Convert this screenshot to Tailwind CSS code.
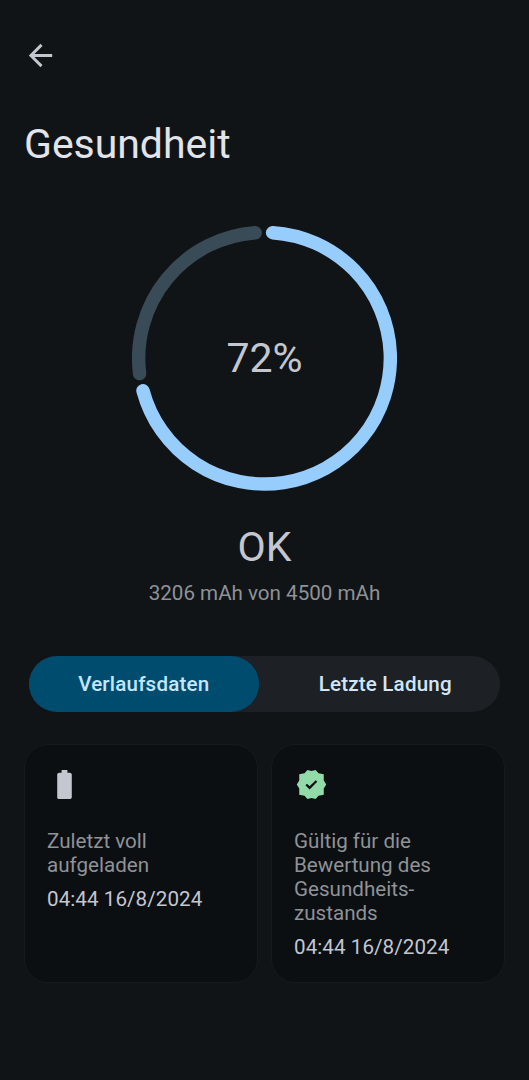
<!DOCTYPE html>
<html lang="de">

<head>
    <meta charset="UTF-8">
    <meta name="viewport" content="width=device-width, initial-scale=1.0">
    <title>Gesundheit</title>
    <script src="https://cdn.jsdelivr.net/npm/@tailwindcss/browser@4"></script>
</head>

<body class="bg-[#111417] font-[Roboto,sans-serif] text-[#c4c6d0]">
    <div class="h-[1080px] w-[529px] overflow-hidden px-6">
        <header>
            <button type="button" class="mt-[38px] block" aria-label="Zurück">
                <svg class="-ml-[1.5px] size-[35px]" viewBox="0 0 24 24" fill="currentColor">
                    <path d="M20 11H7.83l5.59-5.59L12 4l-8 8 8 8 1.41-1.41L7.83 13H20v-2z" />
                </svg>
            </button>
            <h1 class="mt-[47px] text-[41px] leading-[48px] tracking-[-0.04px] text-[#e2e4e9]">Gesundheit</h1>
        </header>

        <main>
            <!-- Ring -->
            <div class="mx-auto mt-[58px] grid size-[265px] place-items-center">
                <svg class="col-start-1 row-start-1 size-[265px]" viewBox="0 0.3 265 265" fill="none" stroke-width="13.4" stroke-linecap="round">
                    <path d="M7.6 147.9A125.8 125.8 0 0 1 123.2 7.1" stroke="#394b57" />
                    <path d="M140.6 7A125.8 125.8 0 1 1 11 165" stroke="#97cdfd" />
                </svg>
                <span class="col-start-1 row-start-1 pb-px text-[41px] leading-[48px]">72%</span>
            </div>
            <div class="mt-[32px] text-center text-[41px] leading-[48px]">OK</div>
            <div class="mt-[10px] text-center text-[20.6px] leading-6 text-[#8f9297]">3206 mAh von 4500 mAh</div>

            <!-- Tabs -->
            <div class="mx-[5px] mt-[51px] grid h-14 grid-cols-2 gap-3 rounded-full bg-[#1d2024] text-[20.6px] font-medium tracking-[0.18px]">
                <button type="button" class="rounded-full bg-[#004c6f] text-[#c4e7ff]">Verlaufsdaten</button>
                <button type="button" class="rounded-full text-[#d2e5f5]">Letzte Ladung</button>
            </div>

            <!-- Karten -->
            <div class="mt-8 grid h-[239px] grid-cols-2 gap-[13px] text-[20.6px] leading-6">
                <div class="rounded-3xl border border-[#171a1d] bg-[#0b0f12] px-[22px] pt-[22px]">
                    <svg class="size-[35px]" viewBox="0 0 24 24" fill="currentColor">
                        <path d="M15.67 4H14V2h-4v2H8.33C7.6 4 7 4.6 7 5.33v15.33C7 21.4 7.6 22 8.33 22h7.33c.74 0 1.34-.6 1.34-1.33V5.33C17 4.6 16.4 4 15.67 4z" />
                    </svg>
                    <p class="mt-[27px] text-[#8f9297]">Zuletzt voll<br>aufgeladen</p>
                    <p class="mt-[10px] tracking-[0.06px]">04:44 16/8/2024</p>
                </div>
                <div class="rounded-3xl border border-[#171a1d] bg-[#0b0f12] px-[22px] pt-[22px]">
                    <svg class="size-[35px]" viewBox="0 0 24 24">
                        <path fill="#92dba9" d="M1.9 12 3.6 9.2 3.6 5 7.2 4.3 9.2 2 12 2.8 14.8 2 16.8 4.3 20.4 5 20.4 9.2 22.1 12 20.4 14.8 20.4 19 16.8 19.7 14.8 22 12 21.2 9.2 22 7.2 19.7 3.6 19 3.6 14.8z" />
                        <path fill="none" stroke="#0b0f12" stroke-width="1.6" d="M8.4 12 10.7 14.3 15.4 9.6" />
                    </svg>
                    <p class="mt-[27px] text-[#8f9297]">Gültig für die<br>Bewertung des<br>Gesundheits-<br>zustands</p>
                    <p class="mt-[10px] tracking-[0.06px]">04:44 16/8/2024</p>
                </div>
            </div>
        </main>
    </div>
</body>

</html>
